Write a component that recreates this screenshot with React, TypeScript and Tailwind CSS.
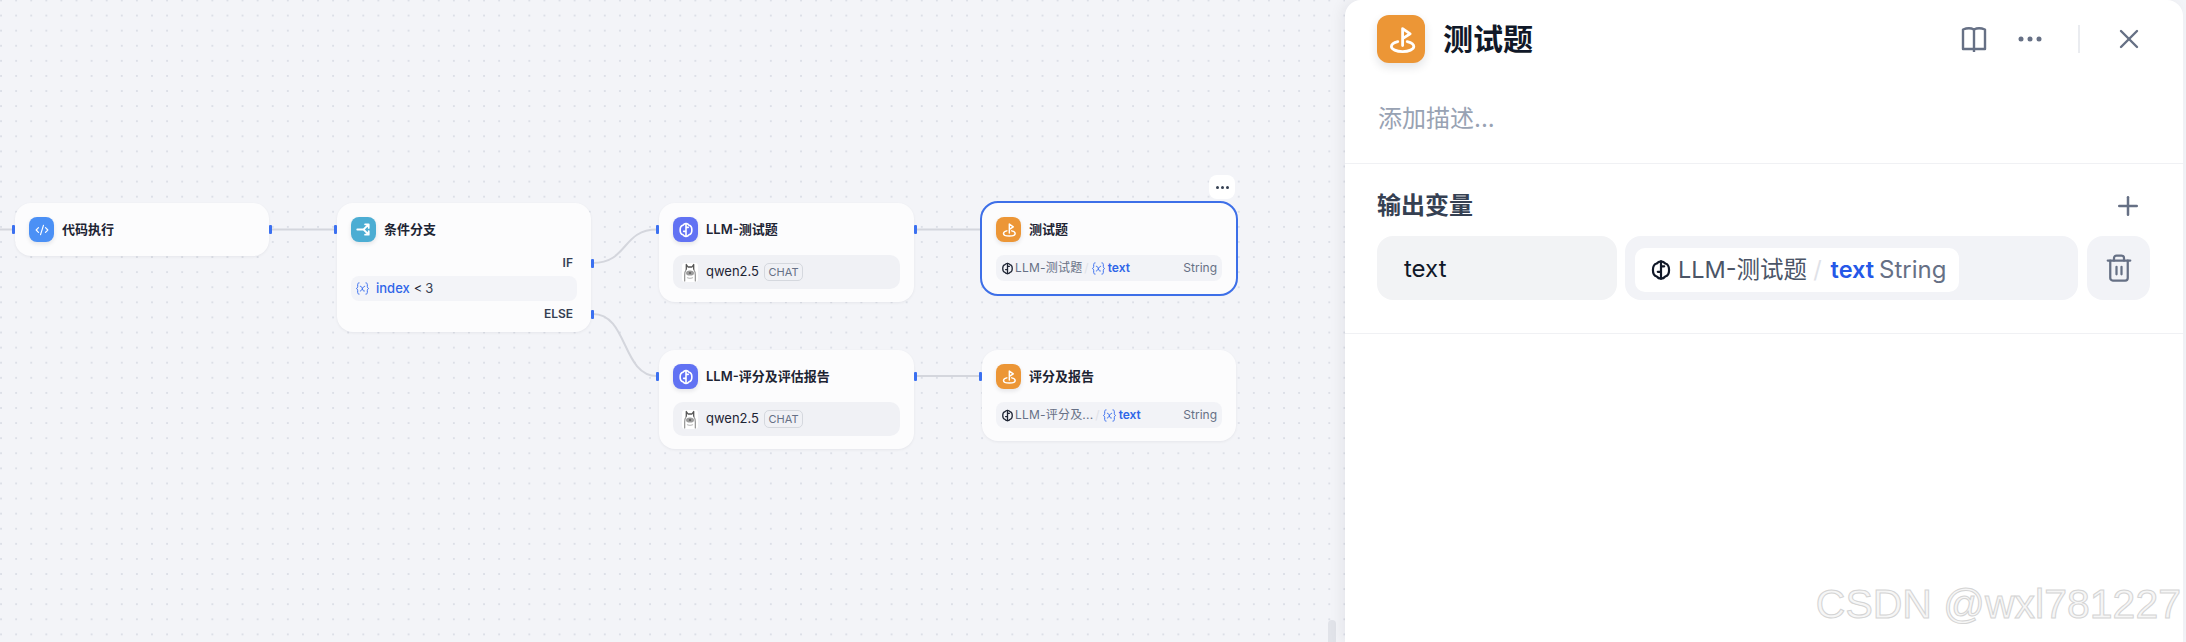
import { ReactNode } from 'react';
import { CodeXml, Plus, Trash2, X } from 'lucide-react';

const BrainIcon = ({ className }: { className: string }) => (
    <svg viewBox="0 0 24 24" fill="none" stroke="currentColor" strokeWidth="2.4" strokeLinecap="round" strokeLinejoin="round" className={className}>
        <path d="M12 2.500c2.200 0 3.600 1 4.600 2.400 2.400.5 4.200 3 4.200 7.100s-1.800 6.600-4.200 7.100c-1 1.400-2.400 2.400-4.600 2.400s-3.600-1-4.600-2.400C5 18.600 3.200 16.100 3.200 12S5 5.400 7.400 4.900C8.400 3.500 9.800 2.500 12 2.500z" />
        <path d="M12 2.500v19M12 8h3.500M12 14H8.500" />
    </svg>
);

const FlagIcon = ({ className }: { className: string }) => (
    <svg viewBox="0 0 24 24" fill="none" stroke="currentColor" strokeWidth="1.4" strokeLinecap="round" strokeLinejoin="round" className={className}>
        <path d="M10.400 13.300c-1.900.4-3.200 1.300-3.200 2.500 0 1.400 2.500 2.500 5.600 2.500s5.600-1.100 5.600-2.500c0-1.200-1.400-2.100-3.300-2.500" />
        <path d="M12.800 15.300V6.800l3.800 2.600-3.800 2.400" />
    </svg>
);

const BranchIcon = ({ className }: { className: string }) => (
    <svg viewBox="0 0 24 24" fill="none" stroke="currentColor" strokeWidth="1.7" strokeLinecap="round" strokeLinejoin="round" className={className}>
        <path d="M6 12h6l4.500-4.500M12 12l4.500 4.500M13.500 7h3.500v3.500M13.500 17h3.500v-3.500" />
    </svg>
);

const VariableIcon = ({ className }: { className: string }) => (
    <svg viewBox="0 0 24 24" fill="none" stroke="currentColor" strokeWidth="1.6" strokeLinecap="round" strokeLinejoin="round" className={className}>
        <path d="M6.500 3C4.800 3 4.300 4 4.300 5.500V9c0 1.400-.8 2.500-2 3 1.200.5 2 1.600 2 3v3.500C4.300 20 4.800 21 6.500 21" />
        <path d="M17.500 3c1.700 0 2.200 1 2.200 2.500V9c0 1.400.8 2.500 2 3-1.200.5-2 1.600-2 3v3.500c0 1.500-.5 2.500-2.200 2.500" />
        <path d="M8.500 8.500c1.500 0 2 .6 2.500 2l1.600 4c.5 1.300 1 1.500 2.400 1.500M15.500 8.500c-1.500 0-2.500 1.500-3.500 3.500s-2 4-3.500 4" />
    </svg>
);

const LlamaIcon = () => (
    <svg viewBox="0 0 16 19" fill="none" className="w-4 h-[19px] shrink-0">
        <rect width="16" height="19" rx="3" fill="#ffffff" />
        <path d="M4.300 7V1.500L6 4h4l1.700-2.500V7" stroke="#555555" strokeWidth="1.300" strokeLinejoin="round" />
        <path d="M4.300 6.500C3 8 2.700 10 2.700 12v6M11.700 6.500C13 8 13.300 10 13.300 12v6" stroke="#8a8a8a" strokeWidth="1.100" strokeLinecap="round" />
        <ellipse cx="8" cy="10" rx="4" ry="2.600" fill="#9c9c9c" />
        <circle cx="8" cy="10" r="1.100" fill="#5f5f5f" />
        <path d="M5 14.500c1.800 1 4.200 1 6 0" stroke="#c4c4c4" strokeWidth="1.100" />
    </svg>
);

const Handle = ({ className }: { className: string }) => (
    <span className={`absolute w-[3px] h-[9px] rounded-[1px] bg-[#3b70f0] ${className}`} />
);

const NodeIcon = ({ className, children }: { className: string; children: ReactNode }) => (
    <div className={`w-[25px] h-[25px] shrink-0 rounded-lg flex items-center justify-center text-white shadow-[0_2px_4px_rgba(16,24,40,0.10)] ${className}`}>
        {children}
    </div>
);

const NodeHeader = ({ icon, title }: { icon: ReactNode; title: string }) => (
    <div className="flex items-center gap-2 h-[25px]">
        {icon}
        <span className="text-[13px] font-semibold text-[#1d2433] whitespace-nowrap">{title}</span>
    </div>
);

const ModelRow = () => (
    <div className="mt-[13px] h-[34px] rounded-[10px] bg-[#f0f1f5] pl-[9px] flex items-center">
        <LlamaIcon />
        <span className="ml-2 text-[13px] text-[#1d2433]">qwen2.5</span>
        <span className="ml-[5px] h-[18px] w-[39px] rounded-[5px] border border-[#d5d8de] text-[11px] text-[#667085] flex items-center justify-center">CHAT</span>
    </div>
);

const VarRow = ({ label }: { label: string }) => (
    <div className="mt-[13px] h-[26px] rounded-lg bg-[#f2f3f7] px-[5px] flex items-center text-xs text-[#667085]">
        <BrainIcon className="w-[13px] h-[13px] text-[#1d2433] shrink-0" />
        <span className="ml-[1px] whitespace-nowrap tracking-[0.2px]">{label}</span>
        <span className="mx-[2px] text-[#dfe2e8]">/</span>
        <VariableIcon className="w-[15px] h-[15px] text-[#3b70f0] shrink-0" />
        <span className="ml-[2px] font-semibold text-[#2f66e8]">text</span>
        <span className="ml-auto">String</span>
    </div>
);

const nodeBase = 'absolute rounded-2xl bg-[#fcfcfd] px-[14px] pt-[14px] shadow-[0_1px_3px_rgba(16,24,40,0.06)]';

function Canvas() {
    return (
        <div className="relative flex-1 overflow-hidden bg-[radial-gradient(circle,#dcdfe7_0.7px,transparent_1px)] bg-[length:15.1px_15.1px] bg-[position:8.6px_8px]">
            {/* edges */}
            <svg className="absolute inset-0 w-full h-full" fill="none" stroke="#d4d6dd" strokeWidth="2">
                <path d="M0 229.500H13" />
                <path d="M271 229.500H335" />
                <path d="M593 263C628 263 622 229.500 657 229.500" />
                <path d="M593 314C628 314 622 376 657 376" />
                <path d="M916 229.500H981" />
                <path d="M916 376H980" />
            </svg>

            {/* code node */}
            <div className={`${nodeBase} left-[15px] top-[203px] w-[254px] h-[53px]`}>
                <NodeHeader title="代码执行" icon={<NodeIcon className="bg-[#4b90f5]"><CodeXml className="w-[14px] h-[14px]" /></NodeIcon>} />
                <Handle className="left-[-3px] top-[22px]" />
                <Handle className="right-[-3px] top-[22px]" />
            </div>

            {/* branch node */}
            <div className={`${nodeBase} left-[337px] top-[203px] w-[254px] pb-[10px]`}>
                <NodeHeader title="条件分支" icon={<NodeIcon className="bg-[#4cadd3]"><BranchIcon className="w-[25px] h-[25px]" /></NodeIcon>} />
                <div className="mt-[13px] h-4 pr-1 flex items-center justify-end text-xs font-semibold text-[#354052]">IF</div>
                <div className="mt-[5px] h-[25px] rounded-lg bg-[#f3f4f8] px-1 flex items-center text-[13px]">
                    <VariableIcon className="w-[15px] h-[15px] text-[#3b70f0] shrink-0" />
                    <span className="ml-[6px] font-medium text-[#2f66e8]">index</span>
                    <span className="ml-1 text-[#1d2433]">&lt;</span>
                    <span className="ml-[3px] text-[#354052]">3</span>
                </div>
                <div className="mt-[5px] h-4 pr-1 flex items-center justify-end text-xs font-semibold text-[#354052]">ELSE</div>
                <Handle className="left-[-3px] top-[22px]" />
                <Handle className="right-[-3px] top-[56px]" />
                <Handle className="right-[-3px] top-[107px]" />
            </div>

            {/* llm nodes */}
            <div className={`${nodeBase} left-[659px] top-[203px] w-[255px] pb-[13px]`}>
                <NodeHeader title="LLM-测试题" icon={<NodeIcon className="bg-[#6172f3]"><BrainIcon className="w-4 h-4" /></NodeIcon>} />
                <ModelRow />
                <Handle className="left-[-3px] top-[22px]" />
                <Handle className="right-[-3px] top-[22px]" />
            </div>
            <div className={`${nodeBase} left-[659px] top-[350px] w-[255px] pb-[13px]`}>
                <NodeHeader title="LLM-评分及评估报告" icon={<NodeIcon className="bg-[#6172f3]"><BrainIcon className="w-4 h-4" /></NodeIcon>} />
                <ModelRow />
                <Handle className="left-[-3px] top-[22px]" />
                <Handle className="right-[-3px] top-[22px]" />
            </div>

            {/* end nodes */}
            <div className={`${nodeBase} left-[982px] top-[203px] w-[254px] pb-[13px] outline-2 outline-[#3d6fe8]`}>
                <NodeHeader title="测试题" icon={<NodeIcon className="bg-[#ec9636]"><FlagIcon className="w-[25px] h-[25px]" /></NodeIcon>} />
                <VarRow label="LLM-测试题" />
                <div className="absolute right-[1px] top-[-28px] w-[26px] h-6 rounded-lg bg-white flex items-center justify-center gap-[2px]">
                    <span className="w-[3px] h-[3px] rounded-full bg-[#354052]" />
                    <span className="w-[3px] h-[3px] rounded-full bg-[#354052]" />
                    <span className="w-[3px] h-[3px] rounded-full bg-[#354052]" />
                </div>
            </div>
            <div className={`${nodeBase} left-[982px] top-[350px] w-[254px] pb-[13px]`}>
                <NodeHeader title="评分及报告" icon={<NodeIcon className="bg-[#ec9636]"><FlagIcon className="w-[25px] h-[25px]" /></NodeIcon>} />
                <VarRow label="LLM-评分及..." />
                <Handle className="left-[-3px] top-[22px]" />
            </div>

            {/* scrollbar */}
            <div className="absolute left-[1328px] top-[620px] w-2 h-[30px] rounded-t-md bg-[#e1e3e9]" />
        </div>
    );
}

function Panel() {
    return (
        <aside className="w-[838px] shrink-0 rounded-t-2xl bg-white shadow-[-4px_0_14px_rgba(16,24,40,0.06)] z-10">
            <div className="pl-8 pr-[33px] pt-[15px] pb-[29px] border-b border-[#f0f1f4]">
                <div className="flex items-center h-12">
                    <div className="w-12 h-12 rounded-xl bg-[#ec9636] text-white shadow-[0_4px_10px_rgba(16,24,40,0.12)]">
                        <FlagIcon className="w-12 h-12" />
                    </div>
                    <h1 className="ml-[18px] text-[30px] leading-none font-bold text-[#101828]">测试题</h1>
                    <svg viewBox="0 0 26 26" fill="none" stroke="#667085" strokeWidth="2.400" strokeLinejoin="round" className="ml-auto w-[26px] h-[26px]">
                        <path d="M2 3.500c4-1.500 8-1.500 11 0 3-1.500 7-1.500 11 0V23H2z" />
                        <path d="M13 3.500V26" />
                    </svg>
                    <svg viewBox="0 0 24 6" fill="#667085" className="ml-[31px] w-6 h-[6px]">
                        <circle cx="3" cy="3" r="2.500" />
                        <circle cx="12" cy="3" r="2.500" />
                        <circle cx="21" cy="3" r="2.500" />
                    </svg>
                    <div className="ml-9 w-[2px] h-7 bg-[#eaecf0]" />
                    <X className="ml-[33px] mr-[5px] w-8 h-8 text-[#667085]" strokeWidth={1.800} />
                </div>
                <p className="mt-[41px] ml-[1px] text-2xl leading-[30px] text-[#98a2b3]">添加描述...</p>
            </div>

            <div className="pl-8 pr-[33px] pt-[28px] pb-[33px] border-b border-[#f0f1f4]">
                <div className="flex items-center justify-between h-7">
                    <h2 className="text-2xl leading-7 font-semibold text-[#354052]">输出变量</h2>
                    <Plus className="mr-[7px] w-[30px] h-[30px] text-[#667085]" strokeWidth={2} />
                </div>
                <div className="mt-4 flex h-16">
                    <div className="w-60 rounded-2xl bg-[#f2f3f5] pt-[2px] pl-[27px] flex items-center text-2xl text-[#101828]">text</div>
                    <div className="ml-2 w-[453px] rounded-2xl bg-[#f2f3f7] flex items-start pt-3 pl-[10px]">
                        <div className="h-11 rounded-[10px] bg-white pl-[15px] pr-[13px] flex items-center text-[23.5px] text-[#4b5567]">
                            <BrainIcon className="w-[22px] h-[22px] text-[#101828]" />
                            <span className="ml-[6px]">LLM-测试题</span>
                            <span className="ml-[6px] mr-[9px] text-[#dfe2e8]">/</span>
                            <span className="font-semibold text-[#2558e8]">text</span>
                            <span className="ml-[5px] text-2xl text-[#667085]">String</span>
                        </div>
                    </div>
                    <div className="ml-[9px] w-[63px] rounded-2xl bg-[#f2f3f7] flex items-center justify-center">
                        <Trash2 className="w-[30px] h-[30px] text-[#667085]" strokeWidth={1.800} />
                    </div>
                </div>
            </div>
        </aside>
    );
}

export default function App() {
    return (
        <div className="relative flex h-screen w-full overflow-hidden bg-[#f3f4f8] font-['Inter','Noto_Sans_CJK_SC',sans-serif]">
            <Canvas />
            <Panel />
            <div className="w-[3px] shrink-0" />
            {/* watermark */}
            <span className="absolute right-[5px] top-[581px] z-20 font-['Liberation_Sans',sans-serif] text-[41px] leading-[47px] whitespace-nowrap text-[#f6f6f6] [-webkit-text-stroke:1px_#d4d4d4]">CSDN @wxl781227</span>
        </div>
    );
}
